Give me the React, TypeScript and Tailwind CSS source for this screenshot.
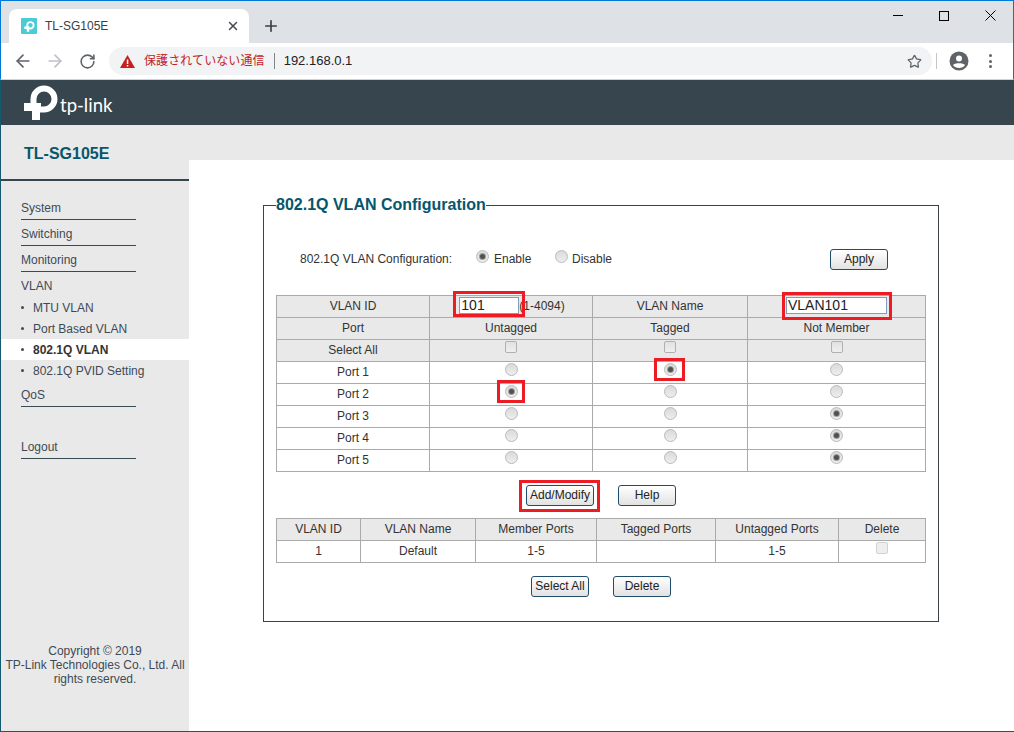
import { ArrowLeft, ArrowRight, RotateCw, Star, Plus, X } from 'lucide-react'

const ports = [
  { name: 'Port 1', sel: 1 },
  { name: 'Port 2', sel: 0 },
  { name: 'Port 3', sel: 2 },
  { name: 'Port 4', sel: 2 },
  { name: 'Port 5', sel: 2 },
]

const menuLink = 'block w-[115px] h-[26px] pt-[7px] leading-[14px] border-b border-[#3a4a52]'

function Radio({ on, mark }: { on?: boolean; mark?: string }) {
  return (
    <span className="relative inline-flex items-center justify-center w-[13px] h-[13px] rounded-full border border-[#bbbbbb] bg-gradient-to-b from-[#dadada] to-[#eeeeee]">
      {on && <span className="w-[5px] h-[5px] rounded-full bg-[#505050] ring-1 ring-[#a0a0a0]" />}
      {mark && <span className={`absolute border-[3px] border-[#ed1c24] ${mark}`} />}
    </span>
  )
}

function Check({ dim }: { dim?: boolean }) {
  return <span className={`inline-block w-[12px] h-[12px] rounded-[2px] border ${dim ? 'border-[#d2d2d2] bg-[#eeeeee]' : 'border-[#b0b0b0] bg-gradient-to-b from-[#e2e2e2] to-[#efefef]'}`} />
}

function Btn({ label, marked }: { label: string; marked?: boolean }) {
  return (
    <button className={`relative h-[21px] ${marked ? 'w-[68px]' : 'w-[58px]'} rounded-[3px] border border-[#1f4d6b] bg-gradient-to-b from-white to-[#e2e2e2] text-[12px] leading-[19px] text-[#222]`}>
      {label}
      {marked && <span className="absolute left-[-8px] right-[-7px] top-[-6px] bottom-[-7px] border-[3px] border-[#ed1c24]" />}
    </button>
  )
}

function TpLogo() {
  return (
    <svg width="34" height="36" viewBox="23 85 34 36" fill="none">
      <path d="M32.500 106V99a10.500 10.500 0 1 1 10.500 10.500h-4" stroke="#fff" strokeWidth="6" />
      <rect x="23" y="103" width="17" height="8" fill="#fff" />
      <rect x="31" y="103" width="8" height="17" fill="#fff" />
    </svg>
  )
}

// text sits 1px above the middle of the row, controls 3px above
const th = 'h-[22px] p-0 pb-[2px] border border-[#aaaaaa] text-center font-normal'
const ctl = 'h-[22px] p-0 pb-[7px] border border-[#aaaaaa] text-center font-normal'
const gray = 'bg-[#e9e9e9]'

export default function App() {
  return (
    <div className="w-[1014px] h-[732px] overflow-hidden flex flex-col bg-white text-[12px] text-[#333] font-['Liberation_Sans','Noto_Sans_CJK_JP',sans-serif]">
      {/* browser chrome */}
      <div className="h-[43px] shrink-0 flex items-end bg-[#dee1e6] border-t border-[#0078d7] border-x-[1px] border-x-[#0078d7] pl-[8px]">
        <div className="w-[240px] h-[34px] bg-white rounded-t-[8px] flex items-center pl-[12px] pr-[9px]">
          <span className="w-[16px] h-[16px] bg-[#4acbd6] rounded-[1px] flex items-center justify-center">
            <svg width="11" height="11" viewBox="23 85 34 36" fill="none">
              <path d="M32.500 106V99a10.500 10.500 0 1 1 10.500 10.500h-4" stroke="#fff" strokeWidth="6" />
              <rect x="23" y="103" width="17" height="8" fill="#fff" />
              <rect x="31" y="103" width="8" height="17" fill="#fff" />
            </svg>
          </span>
          <span className="ml-[8px] text-[#3c4043]">TL-SG105E</span>
          <X size={14} strokeWidth={2.5} className="ml-auto text-[#45494e]" />
        </div>
        <div className="h-[34px] flex items-center ml-[13px]">
          <Plus size={18} strokeWidth={2.2} className="text-[#3c4043]" />
        </div>
        <div className="ml-auto self-start flex items-center h-[29px] text-black">
          <span className="w-[46px] flex justify-center">
            <span className="w-[10px] h-px bg-black" />
          </span>
          <span className="w-[46px] flex justify-center">
            <span className="w-[10px] h-[10px] border border-black" />
          </span>
          <span className="w-[46px] flex justify-center">
            <svg width="11" height="11" viewBox="0 0 11 11" stroke="#000" strokeWidth="1"><path d="M.5.5l10 10M10.500.5l-10 10" /></svg>
          </span>
        </div>
      </div>
      <div className="h-[37px] shrink-0 flex items-center bg-white border-x border-x-[#0078d7] border-b border-b-[#d0d2d5] pl-[12px] pr-[13px]">
        <ArrowLeft size={20} className="text-[#5f6368]" />
        <ArrowRight size={20} className="ml-[12px] text-[#bdc1c6]" />
        <RotateCw size={17} strokeWidth={2.2} className="ml-[14px] text-[#5f6368]" />
        <div className="ml-[13px] h-[28px] w-[823px] rounded-full bg-[#f1f3f4] flex items-center pl-[11px] pr-[10px]">
          <svg width="15" height="13" viewBox="0 0 15 13"><path d="M7.500 0L15 13H0z" fill="#c5221f" /><rect x="6.800" y="4.500" width="1.500" height="4.500" fill="#fff" /><rect x="6.800" y="10" width="1.500" height="1.500" fill="#fff" /></svg>
          <span className="ml-[9px] text-[#c5221f] tracking-[0.1px]">保護されていない通信</span>
          <span className="ml-[9px] w-px h-[16px] bg-[#80868b]" />
          <span className="ml-[9px] text-[13px] text-[#202124]">192.168.0.1</span>
          <Star size={15} strokeWidth={2} className="ml-auto text-[#5f6368]" />
        </div>
        <span className="ml-[4px] w-px h-[16px] bg-[#c4c7ca]" />
        <svg className="ml-[12px]" width="20" height="20" viewBox="0 0 20 20">
          <circle cx="10" cy="10" r="9.500" fill="#5f6368" />
          <circle cx="10" cy="7.500" r="3" fill="#fff" />
          <path d="M4 14c1.500-2.500 10.500-2.500 12 0-1.500 2.200-3.500 3-6 3s-4.500-.8-6-3z" fill="#fff" />
        </svg>
        <span className="ml-[20px] flex flex-col gap-[2.500px]">
          <span className="w-[3px] h-[3px] rounded-full bg-[#5f6368]" />
          <span className="w-[3px] h-[3px] rounded-full bg-[#5f6368]" />
          <span className="w-[3px] h-[3px] rounded-full bg-[#5f6368]" />
        </span>
      </div>

      {/* tp-link header */}
      <div className="h-[45px] shrink-0 bg-[#37464e] flex items-center pl-[23px] border-l border-l-[#135a70]">
        <TpLogo />
        <span className="ml-[2px] mt-[5px] text-[18.500px] leading-none text-white font-['Lato',sans-serif]">tp-link</span>
      </div>

      <div className="flex-1 flex border-l border-l-[#135a70] border-b border-b-[#135a70]">
        {/* sidebar */}
        <div className="w-[188px] shrink-0 bg-[#e9e9e9] flex flex-col text-[#3f4a55]">
          <div className="h-[56px] shrink-0 border-b-2 border-[#37464e] pl-[23px] pt-[20px] text-[16px] leading-[18px] font-bold text-[#07566b]">TL-SG105E</div>
          <div className="pt-[13px]">
            <div className="pl-[20px]">
              <a className={menuLink}>System</a>
              <a className={menuLink}>Switching</a>
              <a className={menuLink}>Monitoring</a>
              <a className="block h-[26px] pt-[7px] leading-[14px]">VLAN</a>
            </div>
            <ul className="mt-[-1px]">
              <SubItem label="MTU VLAN" />
              <SubItem label="Port Based VLAN" />
              <SubItem label="802.1Q VLAN" active />
              <SubItem label="802.1Q PVID Setting" />
            </ul>
            <div className="pl-[20px]">
              <a className={menuLink}>QoS</a>
              <a className={`${menuLink} mt-[26px]`}>Logout</a>
            </div>
          </div>
          <p className="mt-[185px] px-[2px] text-center leading-[14px]">Copyright © 2019<br />TP-Link Technologies Co., Ltd. All rights reserved.</p>
        </div>

        {/* content */}
        <div className="flex-1 flex flex-col min-w-0">
          <div className="h-[35px] shrink-0 bg-[#e9e9e9]" />
          <div className="flex-1 pl-[74px] pt-[36px]">
            <fieldset className="w-[676px] border border-[#3a4148] px-[12px] pb-[24px]">
              <legend className="text-[16px] leading-[18px] font-bold text-[#07566b]">802.1Q VLAN Configuration</legend>
              <div className="flex items-center h-[21px] mt-[34px] pl-[24px]">
                <span className="w-[176px]">802.1Q VLAN Configuration:</span>
                <span className="flex -mt-[4px]"><Radio on /></span>
                <span className="ml-[5px] w-[61px]">Enable</span>
                <span className="flex -mt-[4px]"><Radio /></span>
                <span className="ml-[4px]">Disable</span>
                <span className="ml-auto mr-[38px] mt-[2px] flex"><Btn label="Apply" /></span>
              </div>
              <table className="mt-[26px] w-[650px] table-fixed border-collapse">
                <colgroup>
                  <col className="w-[153px]" />
                  <col className="w-[163px]" />
                  <col className="w-[155px]" />
                  <col />
                </colgroup>
                <tbody>
                  <tr className={gray}>
                    <td className={th}>VLAN ID</td>
                    <td className={th}>
                      <div className="flex items-center justify-center pl-[4px] pr-[2px]">
                        <span className="relative flex">
                          <input readOnly value="101" className="w-[60px] h-[17px] px-[1px] border border-[#7f9db9] bg-white text-[14px] text-[#222] outline-none" />
                          <span className="absolute left-[-6px] right-[-6px] top-[-6px] bottom-[-3px] border-[3px] border-[#ed1c24]" />
                        </span>
                        <span>(1-4094)</span>
                      </div>
                    </td>
                    <td className={th}>VLAN Name</td>
                    <td className={th}>
                      <div className="flex justify-center">
                        <span className="relative flex">
                          <input readOnly value="VLAN101" className="w-[101px] h-[17px] px-[1px] border border-[#7f9db9] bg-white text-[14px] text-[#222] outline-none" />
                          <span className="absolute left-[-4px] right-[-5px] top-[-5px] bottom-[-6px] border-[3px] border-[#ed1c24]" />
                        </span>
                      </div>
                    </td>
                  </tr>
                  <tr className={gray}>
                    <td className={th}>Port</td>
                    <td className={th}>Untagged</td>
                    <td className={th}>Tagged</td>
                    <td className={th}>Not Member</td>
                  </tr>
                  <tr className={gray}>
                    <td className={th}>Select All</td>
                    {[0, 1, 2].map(i => (
                      <td key={i} className={ctl}><div className="flex justify-center"><Check /></div></td>
                    ))}
                  </tr>
                  {ports.map((p, r) => (
                    <tr key={p.name}>
                      <td className={th}>{p.name}</td>
                      {[0, 1, 2].map(i => (
                        <td key={i} className={ctl}>
                          <div className="flex justify-center">
                            <Radio
                              on={p.sel === i}
                              mark={r === 0 && i === 1 ? 'left-[-11px] right-[-9px] top-[-6px] bottom-[-6px]' : r === 1 && i === 0 ? 'left-[-9px] right-[-8px] top-[-6px] bottom-[-6px]' : undefined}
                            />
                          </div>
                        </td>
                      ))}
                    </tr>
                  ))}
                </tbody>
              </table>
              <div className="mt-[13px] flex justify-center gap-6">
                <Btn label="Add/Modify" marked />
                <Btn label="Help" />
              </div>
              <table className="mt-[12px] w-[650px] table-fixed border-collapse">
                <colgroup>
                  <col className="w-[84px]" />
                  <col className="w-[115px]" />
                  <col className="w-[121px]" />
                  <col className="w-[119px]" />
                  <col className="w-[123px]" />
                  <col />
                </colgroup>
                <tbody>
                  <tr className={gray}>
                    <td className={th}>VLAN ID</td>
                    <td className={th}>VLAN Name</td>
                    <td className={th}>Member Ports</td>
                    <td className={th}>Tagged Ports</td>
                    <td className={th}>Untagged Ports</td>
                    <td className={th}>Delete</td>
                  </tr>
                  <tr>
                    <td className={th}>1</td>
                    <td className={th}>Default</td>
                    <td className={th}>1-5</td>
                    <td className={th}></td>
                    <td className={th}>1-5</td>
                    <td className={ctl}><div className="flex justify-center"><Check dim /></div></td>
                  </tr>
                </tbody>
              </table>
              <div className="mt-[13px] flex justify-center gap-6">
                <Btn label="Select All" />
                <Btn label="Delete" />
              </div>
            </fieldset>
          </div>
        </div>
      </div>
    </div>
  )
}

function SubItem({ label, active }: { label: string; active?: boolean }) {
  return (
    <li className={`h-[21px] flex items-center pl-[20px] ${active ? 'bg-white font-bold text-[#333]' : ''}`}>
      <span className="w-[3px] h-[3px] rounded-full bg-[#3f4a55]" />
      <span className="ml-[9px]">{label}</span>
    </li>
  )
}
